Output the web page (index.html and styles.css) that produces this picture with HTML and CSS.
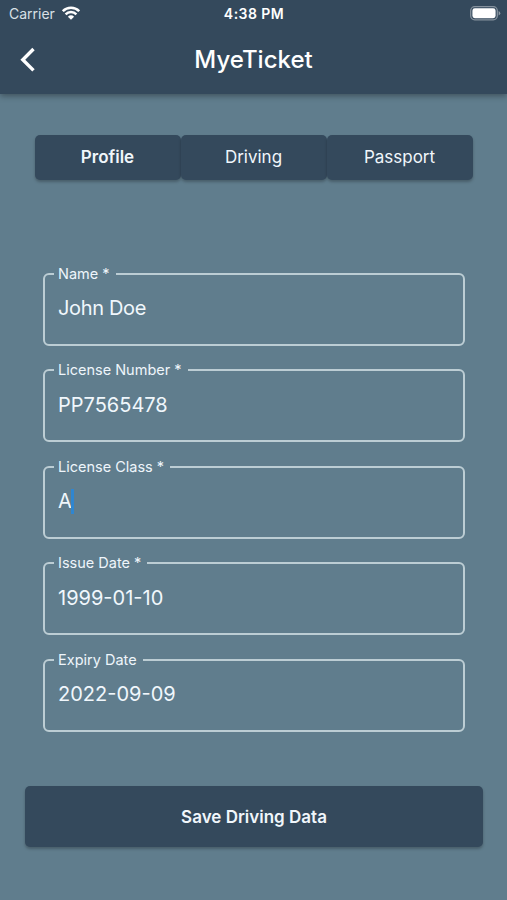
FILE: index.html
```html
<!DOCTYPE html>
<html lang="en">
<head>
    <meta charset="UTF-8">
    <meta name="viewport" content="width=device-width, initial-scale=1.0">
    <title>MyeTicket</title>
    <link rel="stylesheet" href="styles.css">
</head>
<body>
    <header class="header">
        <div class="status-bar">
            <div class="carrier">
                <span>Carrier</span>
                <svg class="wifi" viewBox="0 0 18 14" width="18" height="14">
                    <path d="M0.8 5.2 A11.5 11.5 0 0 1 17.2 5.2" fill="none" stroke="#fff" stroke-width="2.6"/>
                    <path d="M3.6 8.4 A7.4 7.4 0 0 1 14.4 8.4" fill="none" stroke="#fff" stroke-width="2.4"/>
                    <path d="M9 13.8 L5.9 10.7 A4.5 4.5 0 0 1 12.1 10.7 Z" fill="#fff"/>
                </svg>
            </div>
            <span class="time">4:38 PM</span>
            <svg class="battery" viewBox="0 0 31 15" width="31" height="15">
                <rect x="0.7" y="0.7" width="26.6" height="13.1" rx="4" fill="none" stroke="#fff" stroke-opacity="0.4" stroke-width="1.3"/>
                <rect x="2.4" y="2.3" width="23.2" height="9.9" rx="2.4" fill="#fff"/>
                <path d="M28.6 5 Q30.3 5.8 30.3 7.2 Q30.3 8.7 28.6 9.5 Z" fill="#fff" fill-opacity="0.45"/>
            </svg>
        </div>
        <div class="title-bar">
            <svg class="back" viewBox="0 0 16 26" width="16" height="26">
                <path d="M13.5 2 L2.8 12.7 L13.5 23.4" fill="none" stroke="#fff" stroke-width="3.4"/>
            </svg>
            <h1>MyeTicket</h1>
        </div>
    </header>
    <nav class="tabs">
        <button class="tab active">Profile</button>
        <button class="tab">Driving</button>
        <button class="tab">Passport</button>
    </nav>
    <main class="form">
        <fieldset class="field">
            <legend>Name *</legend>
            <div class="value name">John Doe</div>
        </fieldset>
        <fieldset class="field">
            <legend>License Number *</legend>
            <div class="value">PP7565478</div>
        </fieldset>
        <fieldset class="field">
            <legend>License Class *</legend>
            <div class="value">A<span class="cursor"></span></div>
        </fieldset>
        <fieldset class="field">
            <legend>Issue Date *</legend>
            <div class="value">1999-01-10</div>
        </fieldset>
        <fieldset class="field">
            <legend>Expiry Date</legend>
            <div class="value">2022-09-09</div>
        </fieldset>
    </main>
    <button class="save-btn">Save Driving Data</button>
</body>
</html>
```
FILE: styles.css
```css
* {
    box-sizing: border-box;
}
body {
    margin: 0;
    height: 900px;
    overflow: hidden;
    display: flex;
    flex-direction: column;
    font-family: Inter, "Liberation Sans", sans-serif;
    background: #607d8d;
    color: white;
}
.header {
    height: 94px;
    flex-shrink: 0;
    background: #34495c;
    box-shadow: 0 2px 6px rgba(0, 0, 0, 0.35);
}
.status-bar {
    display: grid;
    grid-template-columns: 1fr auto 1fr;
    align-items: center;
    height: 27px;
    padding: 0 6px 0 9px;
    font-size: 14px;
}
.carrier {
    display: flex;
    align-items: center;
    gap: 7px;
    color: #d9e0e6;
}
.wifi {
    margin-top: -1px;
}
.time {
    margin-left: -2px;
    font-size: 14px;
    font-weight: 600;
    letter-spacing: 0.45px;
}
.battery {
    justify-self: end;
}
.title-bar {
    display: grid;
    grid-template-columns: 40px 1fr 40px;
    align-items: center;
    height: 65px;
    padding: 0 20px;
}
.title-bar h1 {
    margin: 0;
    font-size: 24px;
    font-weight: 500;
    text-align: center;
}
.tabs {
    display: flex;
    margin: 41px 34px 0 35px;
}
.tab {
    flex: 1;
    height: 45px;
    padding: 0 1px 1px 0;
    border: none;
    border-radius: 5px;
    background: #34495c;
    color: #f0f6fb;
    font-family: inherit;
    font-size: 17px;
    box-shadow: 0 2px 3px rgba(0, 0, 0, 0.25);
}
.tab.active {
    font-weight: 600;
}
.form {
    display: flex;
    flex-direction: column;
    gap: 16.5px;
    margin: 85.5px 42px 0 43px;
}
.field {
    height: 80px;
    min-width: 0;
    margin: 0;
    padding: 0 9px;
    border: 2px solid #bccdd4;
    border-radius: 6px;
}
.field legend {
    height: 16px;
    padding: 0 6px 0 4px;
    font-size: 14.5px;
    line-height: 16px;
    color: #eef5fb;
}
.value {
    display: flex;
    align-items: center;
    height: 25px;
    margin: 14px 0 0 4px;
    font-size: 20px;
    color: #f0f7fc;
}
.value.name {
    letter-spacing: -0.35px;
}
.cursor {
    width: 3px;
    height: 25px;
    margin-left: -1px;
    background: #2f86d0;
}
.save-btn {
    flex-shrink: 0;
    height: 61px;
    margin: 54.5px 24px 0 25px;
    border: none;
    border-radius: 5px;
    background: #34495c;
    color: #f0f6fb;
    font-family: inherit;
    font-size: 17px;
    font-weight: 600;
    box-shadow: 0 2px 3px rgba(0, 0, 0, 0.25);
}
```
